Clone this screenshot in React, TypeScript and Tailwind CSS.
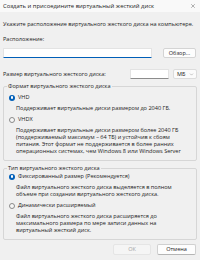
import { ChevronDown, X } from 'lucide-react';

function Radio({ checked }: { checked?: boolean }) {
    return checked ? (
        <span className="flex h-[6px] w-[6px] shrink-0 items-center justify-center rounded-full bg-[#005fb8]">
            <span className="h-[2.5px] w-[2.5px] rounded-full bg-white" />
        </span>
    ) : (
        <span className="h-[6px] w-[6px] shrink-0 rounded-full border-[0.75px] border-[#8a8a8a] bg-[#f7f7f7]" />
    );
}

function Option({ label, checked, lines }: { label: string; checked?: boolean; lines: string[] }) {
    return (
        <div>
            <div className="flex items-center gap-[3px] pl-[5px]">
                <Radio checked={checked} />
                <span>{label}</span>
            </div>
            <div className="mt-[4px] pl-[12px]">
                {lines.map((l, i) => (
                    <p key={i} className="whitespace-nowrap">{l}</p>
                ))}
            </div>
        </div>
    );
}

export default function App() {
    return (
        <div className="flex h-[260px] w-[200px] flex-col overflow-hidden bg-[#f0f0f0] text-[5.55px] leading-[7px] text-[#1b1b1b] [font-family:'Open_Sans','Noto_Sans',sans-serif]">
            <div className="flex h-[12px] items-center justify-between bg-[#f9f9f9] pl-[3px] pr-[4px]">
                <span className="text-[5.9px]">Создать и присоедините виртуальный жесткий диск</span>
                <X className="h-[6px] w-[6px] text-[#333]" strokeWidth={1.5} />
            </div>

            <div className="flex flex-1 flex-col px-[3px]">
                <p className="mt-[9px] whitespace-nowrap">Укажите расположение виртуального жесткого диска на компьютере.</p>
                <p className="mt-[8px]">Расположение:</p>
                <div className="mt-[5px] flex items-center gap-[11px]">
                    <div className="h-[10px] w-[149px] rounded-[1px] border border-b-[#005fb8] border-[#e3e3e3] bg-white" />
                    <button className="flex h-[10px] w-[33px] items-center justify-center rounded-[2px] border border-[#d4d4d4] bg-[#fdfdfd]">
                        Обзор...
                    </button>
                </div>

                <div className="mt-[11px] flex h-[10px] items-center">
                    <span className="flex-1 whitespace-nowrap">Размер виртуального жесткого диска:</span>
                    <div className="h-[10px] w-[39px] rounded-[1px] border border-[#e3e3e3] border-b-[#8c8c8c] bg-white" />
                    <div className="ml-[4px] flex h-[10px] w-[24px] items-center justify-between rounded-[2px] border border-[#dcdcdc] bg-[#fbfbfb] pl-[3px] pr-[2px]">
                        <span>МБ</span>
                        <ChevronDown className="h-[5px] w-[5px] text-[#555]" strokeWidth={1.5} />
                    </div>
                </div>

                <fieldset className="mt-[4px] rounded-[2px] border border-[#d6d6d6] pb-[5px]">
                    <legend className="ml-[3px] px-[1px]">Формат виртуального жесткого диска</legend>
                    <div className="mt-[4px] flex flex-col gap-[4px]">
                        <Option label="VHD" checked lines={['Поддерживает виртуальные диски размером до 2040 ГБ.']} />
                        <Option
                            label="VHDX"
                            lines={[
                                'Поддерживает виртуальные диски размером более 2040 ГБ',
                                '(поддерживаемый максимум – 64 ТБ) и устойчив к сбоям',
                                'питания. Этот формат не поддерживается в более ранних',
                                'операционных системах, чем Windows 8 или Windows Server',
                            ]}
                        />
                    </div>
                </fieldset>

                <fieldset className="mt-[4px] rounded-[2px] border border-[#d6d6d6] pb-[5px]">
                    <legend className="ml-[3px] px-[1px]">Тип виртуального жесткого диска</legend>
                    <div className="mt-[1px] flex flex-col gap-[4px]">
                        <Option
                            label="Фиксированный размер (Рекомендуется)"
                            checked
                            lines={[
                                'Файл виртуального жесткого диска выделяется в полном',
                                'объеме при создании виртуального жесткого диска.',
                            ]}
                        />
                        <Option
                            label="Динамически расширяемый"
                            lines={[
                                'Файл виртуального жесткого диска расширяется до',
                                'максимального размера по мере записи данных на',
                                'виртуальный жесткий диск.',
                            ]}
                        />
                    </div>
                </fieldset>

                <div className="mt-auto mb-[5px] flex justify-end gap-[6px] pr-[1px]">
                    <button className="flex h-[11px] w-[38px] items-center justify-center rounded-[2px] border border-[#e5e5e5] bg-[#f5f5f5] text-[#a3a3a3]">
                        ОК
                    </button>
                    <button className="flex h-[11px] w-[39px] items-center justify-center rounded-[2px] border border-[#d0d0d0] border-b-[#b5b5b5] bg-[#fdfdfd]">
                        Отмена
                    </button>
                </div>
            </div>
        </div>
    );
}
